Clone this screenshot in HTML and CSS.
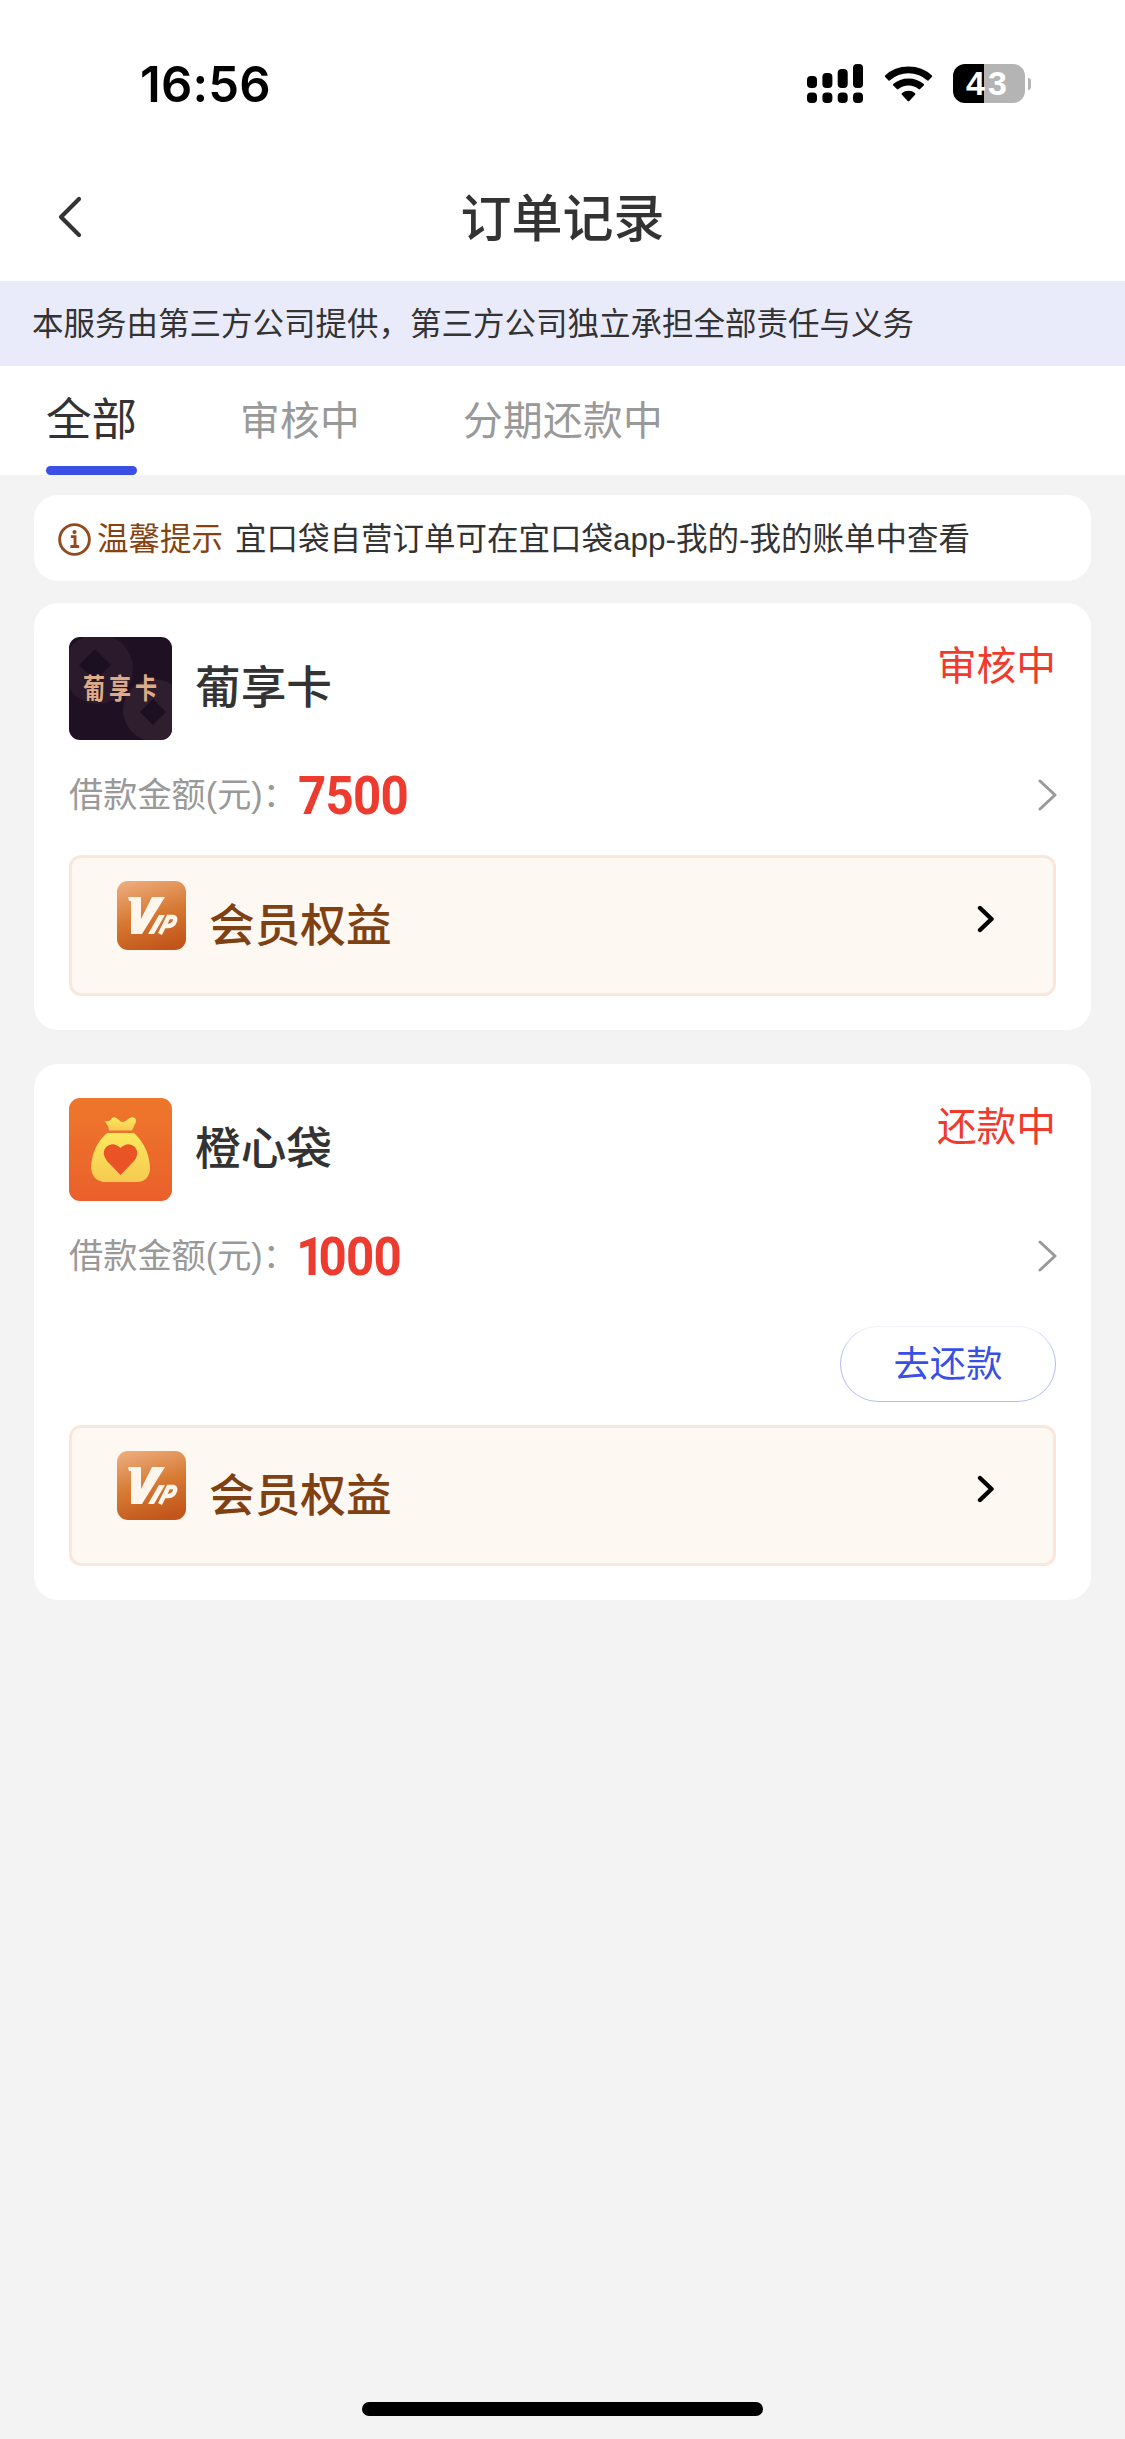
FILE: index.html
```html
<!DOCTYPE html>
<html lang="zh-CN">
<head>
<meta charset="utf-8">
<title>订单记录</title>
<link rel="stylesheet" href="styles.css">
</head>
<body>
<svg class="defs" width="0" height="0" aria-hidden="true">
  <defs>
    <linearGradient id="vipFill" x1="0.3" y1="0" x2="0.6" y2="1">
      <stop offset="0" stop-color="#eca877"/><stop offset="0.5" stop-color="#d67a33"/><stop offset="1" stop-color="#c2551a"/>
    </linearGradient>
    <linearGradient id="orangeFill" x1="0" y1="0" x2="0" y2="1">
      <stop offset="0" stop-color="#ee772b"/><stop offset="1" stop-color="#ea602b"/>
    </linearGradient>
    <linearGradient id="bagFill" x1="0" y1="0" x2="0" y2="1">
      <stop offset="0" stop-color="#fbe95e"/><stop offset="1" stop-color="#f6c950"/>
    </linearGradient>
    <symbol id="vip" viewBox="0 0 69 69">
      <rect width="69" height="69" rx="11" fill="url(#vipFill)"/>
      <path d="M11 16H24V38L35 16H48L25 53H14V20H12Z" fill="#fef6ed"/>
      <path d="M42 34H48L37 53H31Z" fill="#fef6ed"/>
      <path d="M50 36H56Q60 37 57 42Q55 45 51 45H47M52 35L43 53" fill="none" stroke="#fef6ed" stroke-width="4.4"/>
    </symbol>
  </defs>
</svg>
<header class="top">
  <div class="status">
    <span class="clock">16:56</span>
    <div class="indicators">
      <svg class="signal" viewBox="0 0 56 39"><rect y="12" width="10" height="12" rx="4"/><rect x="15.4" y="9" width="10" height="15" rx="4"/><rect x="30.7" y="5" width="10" height="19" rx="4"/><rect x="46" width="10" height="24" rx="4"/><rect y="28.5" width="10" height="10.5" rx="4"/><rect x="15.4" y="28.5" width="10" height="10.5" rx="4"/><rect x="30.7" y="28.5" width="10" height="10.5" rx="4"/><rect x="46" y="28.5" width="10" height="10.5" rx="4"/></svg>
      <svg class="wifi" viewBox="0 0 48 36"><path d="M0.6 9.5Q10 0.5 24 0.5T47.4 9.5Q48 10.3 47.3 11.1L44 14.4Q43.3 15 42.5 14.3Q34.5 7.3 24 7.3T5.5 14.3Q4.7 15 4 14.4L0.7 11.1Q0 10.3 0.6 9.5Z"/><path d="M8.7 18Q15 12.4 24 12.4T39.3 18Q40.1 18.8 39.3 19.6L35.6 23.1Q34.8 23.8 34 23.1Q30 19.4 24 19.4T14 23.1Q13.2 23.8 12.4 23.1L8.7 19.6Q7.9 18.8 8.7 18Z"/><path d="M17.4 27.2Q20 24.8 24 24.8T30.6 27.2Q31.4 28 30.6 28.8L24.8 35Q24 35.8 23.2 35L17.4 28.8Q16.6 28 17.4 27.2Z"/></svg>
      <div class="battery"><span class="battery-body">43</span><span class="battery-tip"></span></div>
    </div>
  </div>
  <nav class="nav">
    <svg class="back" viewBox="0 0 24 42"><path d="M21 3L3 21L21 39"/></svg>
    <h1 class="nav-title">订单记录</h1>
  </nav>
</header>
<p class="notice">本服务由第三方公司提供，第三方公司独立承担全部责任与义务</p>
<div class="tabs">
  <span class="tab tab-active">全部</span>
  <span class="tab">审核中</span>
  <span class="tab">分期还款中</span>
</div>
<main class="content">
  <div class="tip">
    <svg class="tip-icon" viewBox="0 0 32 32"><circle cx="16" cy="16" r="14.4"/><path d="M12.5 13.2H16.5V22.8M12 22.8H20.5"/><circle class="tip-dot" cx="16" cy="8.8" r="2"/></svg>
    <span class="tip-label">温馨提示</span>
    <span class="tip-text">宜口袋自营订单可在宜口袋app-我的-我的账单中查看</span>
  </div>

  <section class="card">
    <div class="card-head">
      <div class="logo logo-dark">
        <svg class="logo-art" viewBox="0 0 103 103"><circle cx="29" cy="32" r="35" fill="#2a1a2b"/><path d="M26 12L42 28L26 44L10 28Z" fill="#1d0f22"/><circle cx="85" cy="73" r="31" fill="#2f1e2d"/><path d="M84 62L97 75L84 88L71 75Z" fill="#1d0f22"/></svg>
        <span class="logo-text">葡享卡</span>
      </div>
      <h2 class="name">葡享卡</h2>
      <span class="state">审核中</span>
    </div>
    <div class="amount">
      <span class="amount-label">借款金额(元)：</span>
      <span class="amount-value">7500</span>
      <svg class="more" viewBox="0 0 19 32"><path d="M2 2L17 16L2 30"/></svg>
    </div>
    <div class="vip">
      <svg class="vip-icon"><use href="#vip"/></svg>
      <span class="vip-text">会员权益</span>
      <svg class="vip-arrow" viewBox="0 0 18 28"><path d="M3 3L14.500 14L3 25"/></svg>
    </div>
  </section>

  <section class="card">
    <div class="card-head">
      <div class="logo">
        <svg class="logo-art" viewBox="0 0 103 103"><rect width="103" height="103" fill="url(#orangeFill)"/><path d="M35.500 23Q41 24 43 20Q46 18 50 22Q53 26 58 22Q62 18 66 20Q68 23 66 26L63 32.500H40Q40 28 35.500 23Z" fill="url(#bagFill)"/><path d="M38 35H65Q81 50 81 72Q79 84 68 84H34Q23 82 22 70Q23 48 38 35Z" fill="url(#bagFill)"/><path d="M51.500 77L38 63Q32 55 37 49Q44 43 51.500 50Q59 43 66 49Q71 56 65 63Z" fill="#ea5326"/></svg>
      </div>
      <h2 class="name">橙心袋</h2>
      <span class="state">还款中</span>
    </div>
    <div class="amount">
      <span class="amount-label">借款金额(元)：</span>
      <span class="amount-value"><span class="digit-one">1</span>000</span>
      <svg class="more" viewBox="0 0 19 32"><path d="M2 2L17 16L2 30"/></svg>
    </div>
    <div class="actions"><button class="repay">去还款</button></div>
    <div class="vip">
      <svg class="vip-icon"><use href="#vip"/></svg>
      <span class="vip-text">会员权益</span>
      <svg class="vip-arrow" viewBox="0 0 18 28"><path d="M3 3L14.500 14L3 25"/></svg>
    </div>
  </section>
</main>
<footer class="home"><div class="home-bar"></div></footer>
</body>
</html>
```

FILE: styles.css
```css
* { box-sizing: border-box; }
body {
  margin: 0;
  width: 1125px;
  height: 2439px;
  display: flex;
  flex-direction: column;
  background: #f3f3f3;
  color: #333;
  font-family: "Liberation Sans", "Noto Sans CJK SC", sans-serif;
  white-space: nowrap;
}
h1, h2, p { margin: 0; }
svg { display: block; flex: none; }
.defs { position: absolute; }

.top { background: #fff; }
.status {
  height: 153px;
  padding: 64px 94px 0 140px;
  display: flex;
  justify-content: space-between;
  align-items: flex-start;
}
.clock {
  font: 600 49px/41px Inter, sans-serif;
  letter-spacing: 0.2px;
  color: #000;
}
.indicators { display: flex; align-items: flex-start; }
.signal { width: 56px; height: 39px; margin-right: 20.500px; }
.wifi { width: 49px; height: 36px; margin: 2px 20.500px 0 0; }
.battery { display: flex; align-items: center; gap: 3px; height: 39px; }
.battery-body {
  width: 72px;
  height: 39px;
  padding-left: 13px;
  border-radius: 12px;
  background: linear-gradient(90deg, #000 31px, #b4b4b4 31px);
  color: #fff;
  font: 700 34px/39px "Liberation Sans", sans-serif;
  letter-spacing: 3px;
}
.battery-tip { width: 3px; height: 12px; background: #b4b4b4; border-radius: 0 3px 3px 0; }

.nav {
  height: 128px;
  padding: 0 58px;
  display: grid;
  grid-template-columns: 24px 1fr 24px;
  align-items: center;
}
.back { width: 24px; height: 42px; fill: none; stroke: #333; stroke-width: 4.200; stroke-linecap: round; stroke-linejoin: round; }
.nav-title { padding-top: 6px; font-size: 51px; font-weight: 500; line-height: 122px; text-align: center; }

.notice {
  height: 85px;
  padding-left: 32px;
  background: #eaebfa;
  font-size: 31.500px;
  line-height: 87px;
}

.tabs {
  height: 109px;
  padding-left: 46px;
  display: flex;
  gap: 103px;
  background: #fff;
}
.tab { font-size: 39.700px; line-height: 111px; letter-spacing: 0.300px; color: #999; }
.tab-active {
  width: 91px;
  padding-top: 4px;
  display: flex;
  flex-direction: column;
  font-size: 45.500px;
  line-height: 102px;
  letter-spacing: 0;
  color: #333;
}
.tab-active::after {
  content: "";
  height: 9px;
  margin-top: -6px;
  border-radius: 4.500px;
  background: #3a50e5;
}

.content { padding: 20px 34px 0; display: flex; flex-direction: column; }
.tip {
  height: 86px;
  margin-bottom: 22px;
  padding-left: 24px;
  display: flex;
  align-items: center;
  border-radius: 24px;
  background: #fff;
  font-size: 31.500px;
  line-height: 88px;
}
.tip-icon { width: 33px; height: 33px; margin: 2px 6px 0 0; fill: none; stroke: #944a1c; stroke-width: 2.800; }
.tip-dot { fill: #944a1c; stroke: none; }
.tip-label { margin-right: 12px; padding-top: 2px; color: #87420f; }
.tip-text { padding-top: 2px; }

.card { margin-bottom: 34px; padding: 34px 35px; background: #fff; border-radius: 24px; }
.card-head { height: 103px; display: flex; align-items: center; }
.logo { width: 103px; height: 103px; flex: none; display: grid; border-radius: 11px; overflow: hidden; }
.logo-dark { background: #1f1024; }
.logo-art, .logo-text { grid-area: 1 / 1; }
.logo-art { width: 103px; height: 103px; }
.logo-text { align-self: center; padding: 2px 0 0 14px; color: #dfac89; font-size: 22px; font-weight: 700; letter-spacing: 4px; line-height: 30px; transform: scaleY(1.3); }
.name { margin-left: 23px; font-size: 45.700px; font-weight: 500; line-height: 108px; }
.state { align-self: flex-start; margin-left: auto; font-size: 39.700px; line-height: 58px; color: #f23a2c; }

.amount { height: 115px; padding-bottom: 4px; display: flex; align-items: center; }
.amount-label { width: 229px; margin-top: -2px; font-size: 34.200px; line-height: 50px; color: #999; }
.amount-value {
  font: 700 53px/60px Roboto, sans-serif;
  letter-spacing: -0.800px;
  color: #ed3b30;
  transform: scaleX(0.93);
  transform-origin: 0 50%;
}
.digit-one { margin-left: -2px; letter-spacing: -6.500px; }
.more { width: 19px; height: 32px; margin: -2px -1px 0 auto; fill: none; stroke: #999; stroke-width: 3; stroke-linecap: round; stroke-linejoin: round; }

.actions { display: flex; justify-content: flex-end; margin: 10px 0 23px; }
.repay {
  width: 216px;
  height: 76px;
  padding: 0 0 6px;
  border: 1.500px solid transparent;
  border-radius: 38px;
  background:
    linear-gradient(#fff, #fff) padding-box,
    linear-gradient(#f4f5fe, #d9ddfa 10px, #b4bcf5 30px) border-box;
  font: 36.300px/66px "Noto Sans CJK SC", sans-serif;
  color: #3a50e5;
}

.vip {
  height: 141px;
  padding: 23px 58px 0 45px;
  display: flex;
  align-items: flex-start;
  border: 3px solid #fae7dc;
  border-radius: 12px;
  background: #fdf8f2;
}
.vip-icon { width: 69px; height: 69px; }
.vip-text { margin-left: 23px; font-size: 45.700px; font-weight: 500; line-height: 91px; color: #7f4012; }
.vip-arrow { width: 18px; height: 28px; margin: 24px 0 0 auto; fill: none; stroke: #000; stroke-width: 4.400; stroke-linecap: round; stroke-linejoin: round; }

.home { margin-top: auto; padding-bottom: 23px; display: flex; justify-content: center; }
.home-bar { width: 401px; height: 14px; border-radius: 7px; background: #000; }
```
